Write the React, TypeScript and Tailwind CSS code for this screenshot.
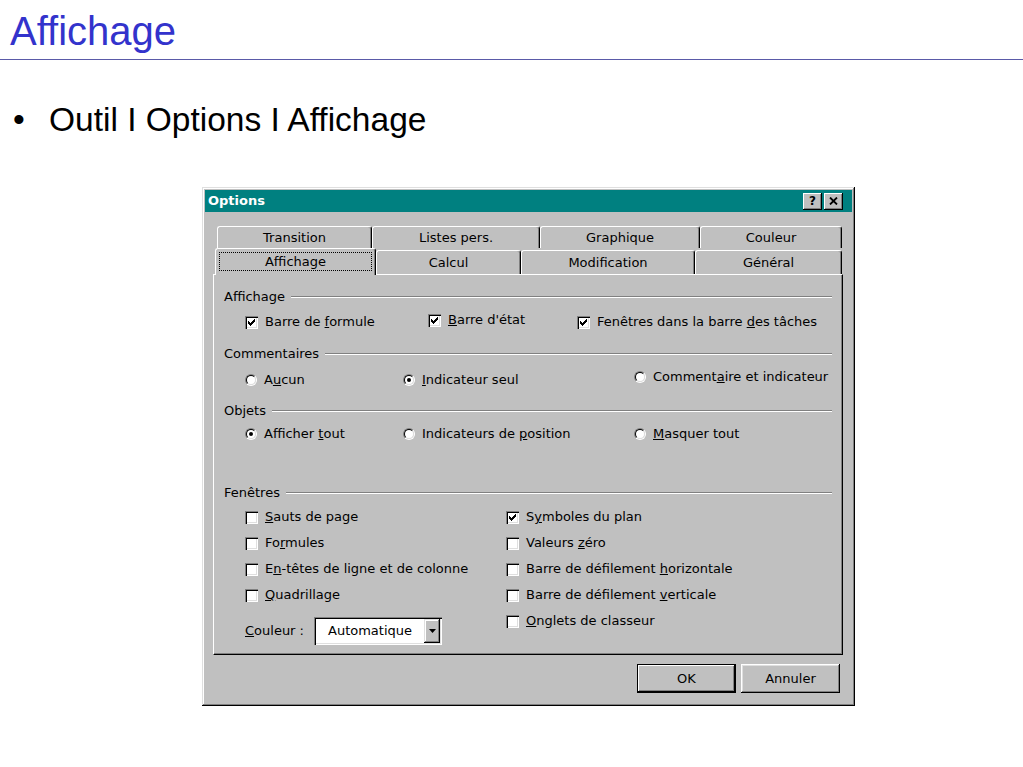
import React from "react";

const F = "font-['DejaVu_Sans',sans-serif]";

const CheckMark = () => {
  const px: [number, number][] = [
    [6, 0], [5, 1], [6, 1], [0, 2], [4, 2], [5, 2], [6, 2],
    [0, 3], [1, 3], [3, 3], [4, 3], [5, 3], [0, 4], [1, 4], [2, 4], [3, 4], [4, 4],
    [1, 5], [2, 5], [3, 5], [2, 6],
  ];
  return (
    <svg width="7" height="7" viewBox="0 0 7 7" shapeRendering="crispEdges">
      {px.map(([x, y], i) => (
        <rect key={i} x={x} y={y} width="1" height="1" fill="#000" />
      ))}
    </svg>
  );
};

const Check = ({ checked }: { checked?: boolean }) => (
  <span className="w-[13px] h-[13px] shrink-0 bg-white flex items-center justify-center shadow-[inset_1px_1px_0_#808080,inset_2px_2px_0_#000,inset_-1px_-1px_0_#fff,inset_-2px_-2px_0_#dfdfdf]">
    {checked && <CheckMark />}
  </span>
);

const Radio = ({ on }: { on?: boolean }) => (
  <span className="w-[12px] h-[12px] shrink-0 rounded-full border border-t-[#808080] border-l-[#808080] border-b-white border-r-white flex">
    <span className="flex-1 rounded-full border border-t-black border-l-black border-b-[#dfdfdf] border-r-[#dfdfdf] bg-white flex items-center justify-center">
      {on && <span className="w-[4px] h-[4px] rounded-full bg-black" />}
    </span>
  </span>
);

const Item = ({
  kind,
  on,
  children,
  className = "",
}: {
  kind: "c" | "r";
  on?: boolean;
  children: React.ReactNode;
  className?: string;
}) => (
  <div className={`flex items-center gap-[7px] whitespace-nowrap ${className}`}>
    {kind === "c" ? <Check checked={on} /> : <Radio on={on} />}
    <span>{children}</span>
  </div>
);

const Group = ({ label, className = "" }: { label: string; className?: string }) => (
  <div className={`flex items-center h-[16px] pl-[10px] pr-[10px] ${className}`}>
    <span className="whitespace-nowrap">{label}</span>
    <span className="flex-1 ml-[6px] h-[2px] border-t border-t-[#808080] border-b border-b-white" />
  </div>
);

const Tab = ({
  w,
  children,
  sel,
}: {
  w: string;
  children: React.ReactNode;
  sel?: boolean;
}) =>
  sel ? (
    <div
      className={`${w} h-[27px] -mb-px relative z-10 bg-[#c0c0c0] rounded-t-[3px] border-t border-l border-white border-r border-r-black shadow-[inset_-1px_0_0_#808080] px-[3px] pt-[3px] pb-[4px] flex`}
    >
      <div className="flex-1 border border-dotted border-black flex items-center justify-center">
        {children}
      </div>
    </div>
  ) : (
    <div
      className={`${w} h-full bg-[#c0c0c0] rounded-t-[3px] border-t border-l border-white border-r border-r-black shadow-[inset_-1px_0_0_#808080] flex items-center justify-center`}
    >
      {children}
    </div>
  );

export default function App() {
  return (
    <div className="w-[1023px] h-[767px] bg-white overflow-hidden">
      <div className="pt-[8px] pl-[10px] h-[54px] font-['Liberation_Sans',Arial,sans-serif] text-[40px] leading-[46px] text-[#3333cc]">
        Affichage
      </div>
      <div className="mt-[5px] h-px bg-[#5a5aa8]" />
      <div className="mt-[41px] flex items-start font-['Liberation_Sans',Arial,sans-serif] text-[33.5px] leading-[38px] text-black">
        <span className="ml-[13px] w-[36px]">•</span>
        <span>Outil I Options I Affichage</span>
      </div>

      <div
        className={`mt-[48px] ml-[202px] w-[653px] h-[519px] bg-[#c0c0c0] p-[3px] flex flex-col text-[13px] leading-[16px] text-black ${F} shadow-[inset_-1px_-1px_0_#000,inset_1px_1px_0_#dfdfdf,inset_-2px_-2px_0_#808080,inset_2px_2px_0_#fff]`}
      >
        {/* Title bar */}
        <div className="h-[22px] bg-[#008080] flex items-center pl-[3px] pr-[9px]">
          <span className="text-white font-bold text-[13px]">Options</span>
          <div className="ml-auto flex gap-[2px]">
            <div className="w-[19px] h-[17px] bg-[#c0c0c0] flex items-center justify-center font-bold text-[12px] shadow-[inset_-1px_-1px_0_#000,inset_1px_1px_0_#fff,inset_-2px_-2px_0_#808080]">
              ?
            </div>
            <div className="w-[19px] h-[17px] bg-[#c0c0c0] flex items-center justify-center shadow-[inset_-1px_-1px_0_#000,inset_1px_1px_0_#fff,inset_-2px_-2px_0_#808080]">
              <svg width="9" height="8" viewBox="0 0 9 8">
                <path d="M1 0.5 L8 7.5 M8 0.5 L1 7.5" stroke="#000" strokeWidth="1.8" />
              </svg>
            </div>
          </div>
        </div>

        {/* Tabs row 1 */}
        <div className="mt-[14px] ml-[12px] h-[22px] flex">
          <Tab w="w-[155px]">Transition</Tab>
          <Tab w="w-[168px]">Listes pers.</Tab>
          <Tab w="w-[160px]">Graphique</Tab>
          <Tab w="w-[142px]">Couleur</Tab>
        </div>
        {/* Tabs row 2 */}
        <div className="ml-[10px] h-[26px] flex items-end">
          <Tab w="w-[161px]" sel>
            Affichage
          </Tab>
          <div className="flex h-[24px]">
            <Tab w="w-[145px]">Calcul</Tab>
            <Tab w="w-[174px]">Modification</Tab>
            <Tab w="w-[147px]">Général</Tab>
          </div>
        </div>

        {/* Panel */}
        <div className="ml-[8px] w-[630px] h-[381px] border-t border-l border-white border-r border-r-black border-b border-b-black shadow-[inset_-1px_-1px_0_#808080] pt-[14px] flex flex-col">
          <Group label="Affichage" />
          <div className="mt-[7px] h-[20px] pl-[31px] grid grid-cols-[183px_149px_1fr] items-center">
            <Item kind="c" on>
              Barre de <u>f</u>ormule
            </Item>
            <Item kind="c" on className="mb-[4px]">
              <u>B</u>arre d'état
            </Item>
            <Item kind="c" on>
              Fenêtres dans la barre <u>d</u>es tâches
            </Item>
          </div>

          <Group label="Commentaires" className="mt-[14px]" />
          <div className="mt-[7px] h-[20px] pl-[31px] grid grid-cols-[158px_231px_1fr] items-center">
            <Item kind="r">
              A<u>u</u>cun
            </Item>
            <Item kind="r" on>
              <u>I</u>ndicateur seul
            </Item>
            <Item kind="r" className="mb-[6px]">
              Comment<u>a</u>ire et indicateur
            </Item>
          </div>

          <Group label="Objets" className="mt-[14px]" />
          <div className="mt-[5px] h-[20px] pl-[31px] grid grid-cols-[158px_231px_1fr] items-center">
            <Item kind="r" on>
              Afficher <u>t</u>out
            </Item>
            <Item kind="r">
              Indicateurs de <u>p</u>osition
            </Item>
            <Item kind="r">
              <u>M</u>asquer tout
            </Item>
          </div>

          <Group label="Fenêtres" className="mt-[41px]" />
          <div className="mt-[3px] pl-[31px] grid grid-cols-[261px_1fr]">
            <div className="flex flex-col">
              <Item kind="c" className="h-[26px]">
                <u>S</u>auts de page
              </Item>
              <Item kind="c" className="h-[26px]">
                Fo<u>r</u>mules
              </Item>
              <Item kind="c" className="h-[26px]">
                E<u>n</u>-têtes de ligne et de colonne
              </Item>
              <Item kind="c" className="h-[26px]">
                <u>Q</u>uadrillage
              </Item>
              <div className="mt-[9px] flex items-center">
                <span className="w-[69px] whitespace-nowrap">
                  <u>C</u>ouleur :
                </span>
                <div className="w-[128px] h-[28px] bg-white flex items-center p-[2px] shadow-[inset_1px_1px_0_#808080,inset_2px_2px_0_#000,inset_-1px_-1px_0_#fff,inset_-2px_-2px_0_#dfdfdf]">
                  <span className="flex-1 pl-[12px]">Automatique</span>
                  <div className="w-[16px] h-[24px] bg-[#c0c0c0] flex items-center justify-center shadow-[inset_-1px_-1px_0_#000,inset_1px_1px_0_#dfdfdf,inset_-2px_-2px_0_#808080,inset_2px_2px_0_#fff]">
                    <svg width="7" height="4" viewBox="0 0 7 4">
                      <path d="M0 0H7L3.5 4Z" fill="#000" />
                    </svg>
                  </div>
                </div>
              </div>
            </div>
            <div className="flex flex-col">
              <Item kind="c" on className="h-[26px]">
                S<u>y</u>mboles du plan
              </Item>
              <Item kind="c" className="h-[26px]">
                Valeurs <u>z</u>éro
              </Item>
              <Item kind="c" className="h-[26px]">
                Barre de défilement <u>h</u>orizontale
              </Item>
              <Item kind="c" className="h-[26px]">
                Barre de défilement <u>v</u>erticale
              </Item>
              <Item kind="c" className="h-[26px]">
                <u>O</u>nglets de classeur
              </Item>
            </div>
          </div>
        </div>

        {/* Buttons */}
        <div className="mt-[9px] flex justify-end gap-[5px] pr-[12px]">
          <div className="w-[99px] h-[29px] border border-black bg-[#c0c0c0] flex items-center justify-center shadow-[inset_-1px_-1px_0_#000,inset_1px_1px_0_#fff,inset_-2px_-2px_0_#808080]">
            OK
          </div>
          <div className="w-[99px] h-[29px] bg-[#c0c0c0] flex items-center justify-center shadow-[inset_-1px_-1px_0_#000,inset_1px_1px_0_#fff,inset_-2px_-2px_0_#808080,inset_2px_2px_0_#dfdfdf]">
            Annuler
          </div>
        </div>
      </div>
    </div>
  );
}
